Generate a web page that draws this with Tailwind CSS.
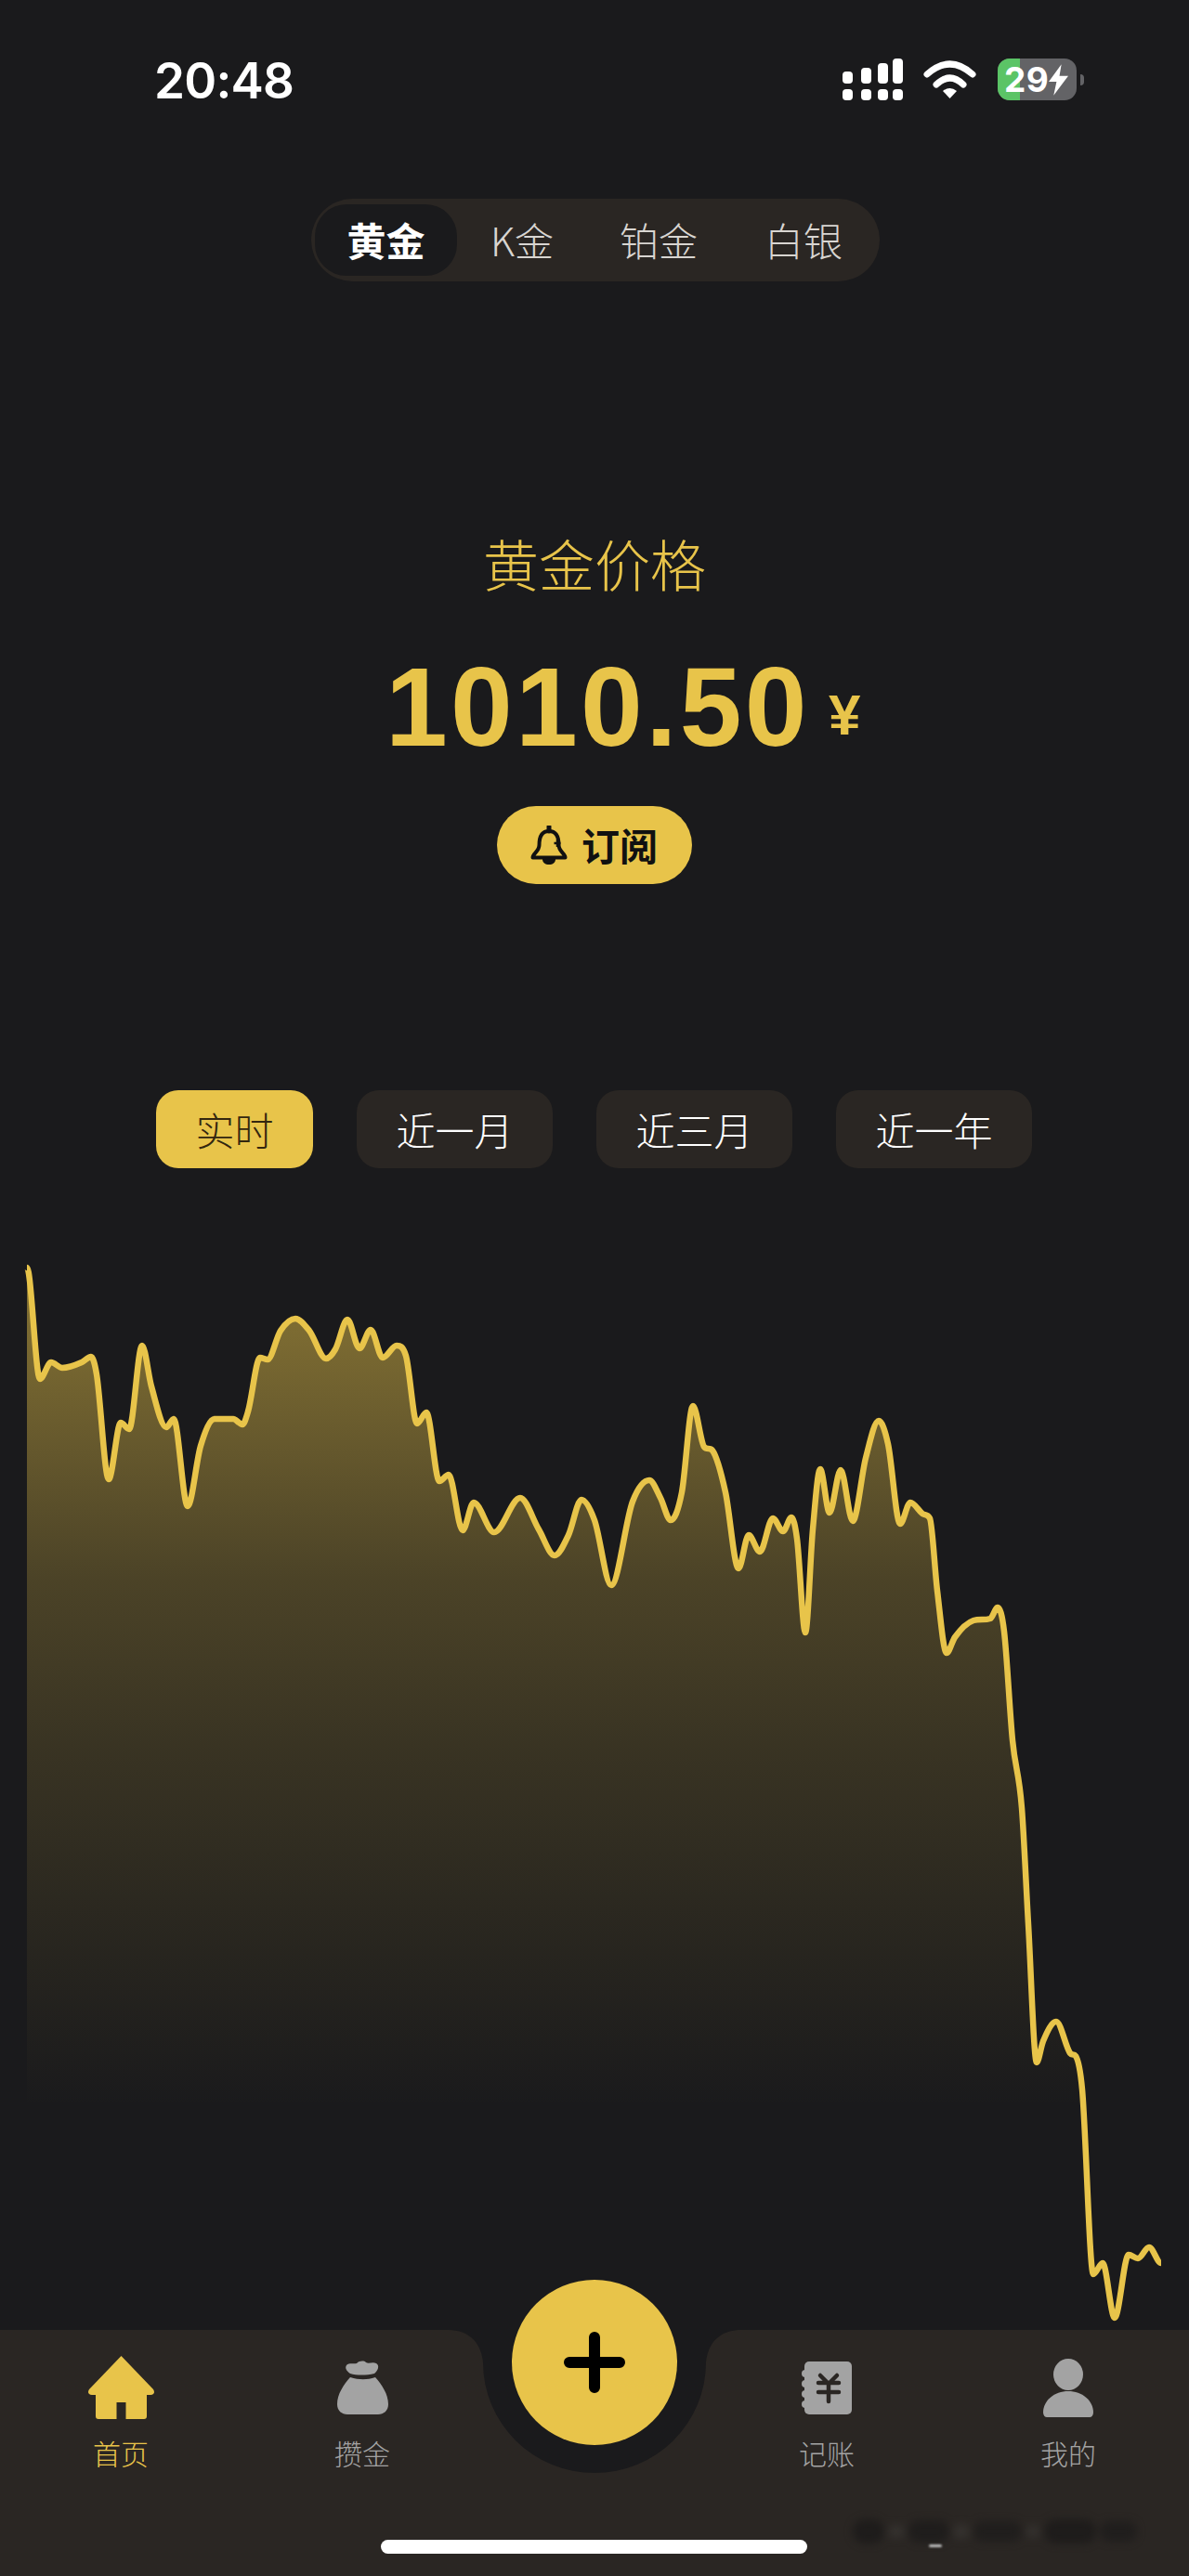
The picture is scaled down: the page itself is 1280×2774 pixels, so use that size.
<!DOCTYPE html>
<html lang="zh-CN">
<head>
  <meta charset="UTF-8" />
  <meta name="viewport" content="width=device-width, initial-scale=1.0" />
  <title>黄金价格</title>
  <script src="https://cdn.jsdelivr.net/npm/@tailwindcss/browser@4"></script>
</head>
<body class="bg-[#1a1a1c] font-['Noto_Sans_CJK_SC',sans-serif]">
<div class="relative w-[1280px] h-[2774px] overflow-hidden flex flex-col">

  <!-- Status bar -->
  <div class="h-[214px] pt-[63px] pl-[166px] pr-[113px] flex justify-between items-start shrink-0">
    <span class="font-['Inter',sans-serif] font-semibold text-[53px] leading-[48px] tracking-[-0.8px] text-white">20:48</span>
    <div class="flex items-start">
      <!-- dual sim signal -->
      <svg width="65" height="45" viewBox="0 0 65 45" fill="#fff">
        <rect x="0" y="14" width="11" height="13" rx="4" /><rect x="20" y="10" width="11" height="17" rx="4" /><rect x="38" y="5" width="11" height="22" rx="4" /><rect x="54" y="0" width="11" height="27" rx="4" />
        <rect x="0" y="33" width="11" height="12" rx="4" /><rect x="20" y="33" width="11" height="12" rx="4" /><rect x="38" y="33" width="11" height="12" rx="4" /><rect x="54" y="33" width="11" height="12" rx="4" />
      </svg>
      <svg class="ml-[22px] mt-[2px]" width="57" height="41" viewBox="0 0 57 41" fill="none">
        <path d="M4 15Q28.5 -7 53 15" stroke="#fff" stroke-width="7" stroke-linecap="round" />
        <path d="M14 26Q28.5 12 43 26" stroke="#fff" stroke-width="7" stroke-linecap="round" />
        <path d="M21 33Q28.5 27 36 33L28.5 41Z" fill="#fff" />
      </svg>
      <!-- battery -->
      <div class="relative ml-[23px] w-[85px] h-[45px] rounded-[13px] bg-[#636366] flex items-center pl-[7px]">
        <div class="absolute left-0 top-0 bottom-0 w-[24px] rounded-l-[13px] bg-[#5bc466]"></div>
        <span class="relative font-['Inter',sans-serif] font-bold text-[37px] leading-[45px] tracking-[0.5px] text-white">29</span>
        <svg class="relative" width="21" height="34" viewBox="0 0 20 32" fill="#fff"><path d="M13 0L0 18H8L5 32L20 12H11Z" /></svg>
      </div>
      <div class="ml-[4px] mt-[17px] w-[4px] h-[12px] rounded-r-full bg-[#636366]"></div>
    </div>
  </div>

  <!-- Metal tabs -->
  <div class="ml-[335px] w-[612px] h-[89px] shrink-0 rounded-full bg-[#2a2623] flex items-center pl-[4px] text-[42px] font-light text-[#d8d5d1]">
    <div class="w-[153px] h-[77px] pb-[2px] rounded-[34px] bg-[#1a1a1c] flex items-center justify-center font-bold text-white">黄金</div>
    <div class="w-[140px] pb-[2px] text-center">K金</div>
    <div class="w-[154px] pb-[2px] text-center">铂金</div>
    <div class="w-[158px] pb-[2px] text-center">白银</div>
  </div>

  <!-- Price -->
  <div class="mt-[273px] h-[60px] shrink-0 text-center text-[60px] leading-[60px] font-light text-[#e8c44a]">黄金价格</div>
  <div class="mt-[65px] h-[120px] shrink-0 pl-[415px] flex items-center text-[#e8c44a] font-['Liberation_Sans',sans-serif] font-bold">
    <span class="text-[120px] leading-[120px] tracking-[3.3px]">1010.50</span>
    <span class="ml-[20px] mt-[17px] text-[62px] leading-[60px]">¥</span>
  </div>
  <div class="mt-[47px] ml-[535px] w-[210px] h-[84px] shrink-0 rounded-full bg-[#e8c44a] flex items-center pl-[36px] gap-[15px] text-[41px] font-bold text-[#111]">
    <svg width="40" height="42" viewBox="0 0 40 42" fill="none">
      <path d="M20 6C12 6 9.500 13 9.500 21C9.500 28 2.500 30 2.500 34.500H37.500C37.500 30 30.500 28 30.500 21C30.500 13 28 6 20 6Z" stroke="#111" stroke-width="4" stroke-linejoin="round" />
      <path d="M20 1V6" stroke="#111" stroke-width="5" stroke-linecap="round" />
      <path d="M13 36H27C27 40 24 42 20 42C16 42 13 40 13 36Z" fill="#111" />
      <path d="M29 15V23M25.500 19H32.500" stroke="#111" stroke-width="2.500" />
    </svg>
    <span class="leading-[40px] pb-[2px]">订阅</span>
  </div>

  <!-- Range tabs -->
  <div class="mt-[222px] h-[84px] shrink-0 pl-[168px] flex gap-[47px] text-[42px] font-light text-white">
    <div class="w-[169px] pb-[2px] rounded-[24px] bg-[#e8c44a] text-[#33260f] flex items-center justify-center">实时</div>
    <div class="w-[211px] pb-[2px] rounded-[24px] bg-[#2a2623] flex items-center justify-center">近一月</div>
    <div class="w-[211px] pb-[2px] rounded-[24px] bg-[#2a2623] flex items-center justify-center">近三月</div>
    <div class="w-[211px] pb-[2px] rounded-[24px] bg-[#2a2623] flex items-center justify-center">近一年</div>
  </div>

  <!-- Chart -->
  <svg class="block mt-[82px] shrink-0" width="1280" height="1169" viewBox="0 1340 1280 1169" fill="none">
    <defs>
      <linearGradient id="areaFill" gradientUnits="userSpaceOnUse" x1="0" y1="1365" x2="0" y2="2270">
        <stop offset="0" stop-color="#e8c44a" stop-opacity="0.52" />
        <stop offset="0.083" stop-color="#e8c44a" stop-opacity="0.47" />
        <stop offset="0.37" stop-color="#e8c44a" stop-opacity="0.24" />
        <stop offset="0.57" stop-color="#e8c44a" stop-opacity="0.15" />
        <stop offset="1" stop-color="#e8c44a" stop-opacity="0" />
      </linearGradient>
    </defs>
    <path id="chartArea" fill="url(#areaFill)" />
    <path id="chartLine" stroke="#e8c44a" stroke-width="6.500" stroke-linejoin="round" />
  </svg>

  <!-- Bottom tab bar -->
  <div class="relative h-[265px] shrink-0">
    <svg class="absolute inset-0" width="1280" height="265" viewBox="0 0 1280 265" fill="#2a2623">
      <path d="M0 0H482C505 0 518 14 520 35A120 119 0 0 0 760 35C762 14 775 0 798 0H1280V265H0Z" />
    </svg>
    <div class="relative grid grid-cols-[260px_260px_240px_260px_260px] pt-[28px] text-[30px] leading-[30px] font-light text-[#a3a3a3]">
      <div class="flex flex-col items-center text-[#e8c44a]">
        <div class="h-[68px] flex items-center">
          <svg width="73" height="68" viewBox="0 0 73 68" fill="#e8c44a"><path d="M36.500 0L71 36Q74 41 68 42H64V65Q64 68 61 68H41.500V50H31.500V68H12Q9 68 9 65V42H5Q-1 41 2 36Z" /></svg>
        </div>
        <span class="mt-[21px]">首页</span>
      </div>
      <div class="flex flex-col items-center">
        <div class="h-[68px] flex items-center">
          <svg width="55" height="58" viewBox="0 0 55 58" fill="#a3a3a3">
            <path d="M10 5C13 2 18 4 21 3C24 0 29 0 31 2C34 4 38 1 42 3C46 5 44 11 40 14C31 16 21 16 14 14C10 11 8 8 10 5Z" />
            <path d="M14 18C24 21 32 21 41 18C48 26 55 36 55 47C55 54 50 58 44 58H11C5 58 0 54 0 47C0 36 7 26 14 18Z" />
          </svg>
        </div>
        <span class="mt-[21px]">攒金</span>
      </div>
      <div></div>
      <div class="flex flex-col items-center">
        <div class="h-[68px] flex items-center">
          <svg width="54" height="57" viewBox="0 0 54 57" fill="#a3a3a3">
            <rect x="3" width="51" height="57" rx="5" />
            <circle cx="4" cy="13" r="4" /><circle cx="4" cy="24" r="4" /><circle cx="4" cy="35" r="4" /><circle cx="4" cy="46" r="4" />
            <path d="M20 15L29 24L38 15M18 23H40M18 33H40M29 24V43" fill="none" stroke="#2a2623" stroke-width="4.500" stroke-linecap="round" stroke-linejoin="round" />
          </svg>
        </div>
        <span class="mt-[21px]">记账</span>
      </div>
      <div class="flex flex-col items-center">
        <div class="h-[68px] flex items-center">
          <svg width="54" height="63" viewBox="0 0 54 63" fill="#a3a3a3">
            <ellipse cx="27" cy="17" rx="16" ry="17" />
            <path d="M0 58C0 45 12 35 27 35C42 35 54 45 54 58C54 61 52 63 50 63H4C2 63 0 61 0 58Z" />
          </svg>
        </div>
        <span class="mt-[21px]">我的</span>
      </div>
    </div>

    <!-- Raised add button -->
    <div class="absolute left-[551px] top-[-54px] w-[178px] h-[178px] rounded-full bg-[#e8c44a] flex items-center justify-center">
      <svg width="66" height="66" viewBox="0 0 66 66" fill="none"><path d="M6 33H60M33 6V60" stroke="#000" stroke-width="12" stroke-linecap="round" /></svg>
    </div>

    <!-- Home indicator and the smudged watermark -->
    <div class="absolute left-[410px] top-[226px] w-[459px] h-[15px] rounded-full bg-white"></div>
    <div class="absolute left-[918px] top-[200px] w-[330px] h-[34px] flex gap-[4px] items-center blur-[4px]">
      <div class="w-[34px] h-[26px] rounded-full bg-[#1e1c1b]"></div>
      <div class="w-[18px] h-[14px] rounded-full bg-[#34312e]"></div>
      <div class="w-[44px] h-[24px] rounded-full bg-[#1f1d1c]"></div>
      <div class="w-[18px] h-[16px] rounded-full bg-[#34312e]"></div>
      <div class="w-[52px] h-[22px] rounded-full bg-[#201e1d]"></div>
      <div class="w-[16px] h-[14px] rounded-full bg-[#33302d]"></div>
      <div class="w-[56px] h-[26px] rounded-full bg-[#1e1c1b]"></div>
      <div class="w-[40px] h-[22px] rounded-full bg-[#201e1d]"></div>
    </div>
    <div class="absolute left-[1000px] top-[231px] w-[14px] h-[3px] blur-[1px] rounded-full bg-[#bdbdbd]"></div>
  </div>
</div>

<script>
  // price curve, page coordinates
  const points = [
    [29,1365],[43,1485],[55,1467],[67,1473],[88,1467],[98,1461],[104,1480],[117,1593],[130,1532],[139,1539],[153,1449],[163,1493],[179,1537],[187,1528],[202,1622],[216,1557],[231,1528],[251,1528],[261,1534],[267,1520],[280,1462],[288,1464],[302,1433],[318,1420],[333,1433],[351,1463],[361,1453],[374,1421],[387,1452],[399,1432],[412,1462],[427,1449],[437,1460],[449,1533],[459,1521],[473,1595],[483,1588],[498,1648],[510,1618],[532,1650],[560,1613],[580,1647],[597,1675],[612,1653],[626,1615],[640,1637],[658,1707],[681,1617],[699,1594],[711,1613],[722,1637],[734,1607],[746,1514],[758,1558],[767,1562],[781,1607],[795,1689],[806,1653],[818,1671],[832,1635],[843,1649],[852,1634],[858,1657],[867,1758],[875,1647],[883,1582],[893,1629],[905,1583],[918,1638],[932,1570],[946,1530],[956,1555],[969,1641],[980,1618],[993,1630],[1001,1635],[1009,1713],[1019,1780],[1028,1763],[1048,1745],[1066,1743],[1074,1731],[1081,1757],[1090,1874],[1100,1947],[1107,2072],[1116,2221],[1123,2198],[1137,2177],[1152,2211],[1158,2214],[1165,2250],[1177,2449],[1187,2437],[1200,2496],[1215,2428],[1225,2432],[1237,2420],[1250,2437]
  ];

  // monotone cubic so peaks stay on their points
  function tangents(p) {
    const t = [];
    for (let i = 0; i < p.length; i++) {
      if (i === 0 || i === p.length - 1) { t.push(0); continue; }
      const a = (p[i][1] - p[i-1][1]) / (p[i][0] - p[i-1][0]);
      const b = (p[i+1][1] - p[i][1]) / (p[i+1][0] - p[i][0]);
      if (a * b <= 0) { t.push(0); continue; }
      const m = Math.min(Math.abs(a + b) / 2, 3 * Math.min(Math.abs(a), Math.abs(b)));
      t.push(Math.sign(a) * m);
    }
    return t;
  }

  const t = tangents(points);
  let d = "M" + points[0].join(" ");
  for (let i = 1; i < points.length; i++) {
    const [x0, y0] = points[i-1], [x1, y1] = points[i];
    const h = (x1 - x0) / 3;
    d += `C${x0 + h} ${y0 + t[i-1] * h} ${x1 - h} ${y1 - t[i] * h} ${x1} ${y1}`;
  }
  document.getElementById("chartLine").setAttribute("d", d);
  document.getElementById("chartArea").setAttribute("d", d + "V2509H29Z");
</script>
</body>
</html>
